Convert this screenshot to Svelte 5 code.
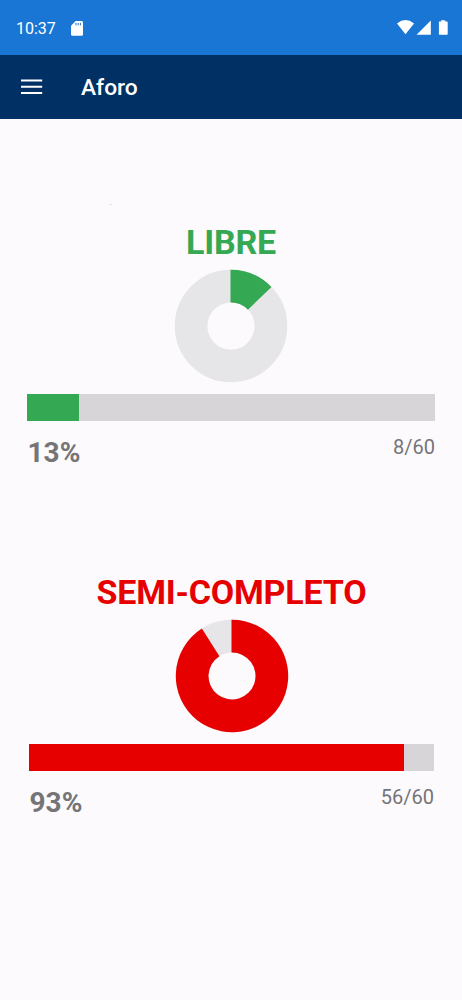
<script>
  const zones = [
    { id: 'libre', label: 'LIBRE', used: 8, total: 60, percent: 13, bar: 12.8, slice: 12.8, color: '#34a853' },
    { id: 'semi', label: 'SEMI-COMPLETO', used: 56, total: 60, percent: 93, bar: 92.6, slice: 91, color: '#e60000' }
  ];

  const R = 56.2;
  const r = 23.5;

  function slicePath(share) {
    const a = (share / 100) * Math.PI * 2;
    const s = Math.sin(a);
    const c = -Math.cos(a);
    const large = share > 50 ? 1 : 0;
    return `M-.5 ${-R}A${R} ${R} 0 ${large} 1 ${R * s} ${R * c}L${r * s} ${r * c}A${r} ${r} 0 ${large} 0 -.5 ${-r}Z`;
  }
</script>

<div class="screen">
  <div class="status">
    <span class="time">10:37</span>
    <svg class="sd" width="12" height="15" viewBox="0 0 12 15">
      <path fill="#fff" d="M4.6 0H10.6Q12 0 12 1.4V13.4Q12 14.8 10.6 14.8H1.4Q0 14.8 0 13.4V4.7Z" />
      <path stroke="#1976d2" stroke-width="1" d="M5 1.9V4.3M7.2 1.9V4.3M9.4 1.9V4.3" />
    </svg>
    <svg class="signals" width="52" height="16" viewBox="0 0 52 16" fill="#fff">
      <path d="M0 3.4Q8.5-3.2 17 3.4L8.5 14.3Z" />
      <path d="M33.8 .6V14.8H19.6Z" />
      <path d="M44.2 .2H48.2V1.5H50Q50.7 1.5 50.7 2.2V14Q50.7 14.8 50 14.8H42.6Q41.9 14.8 41.9 14V2.2Q41.9 1.5 42.6 1.5H44.2Z" />
    </svg>
  </div>

  <header>
    <svg class="menu" width="22" height="16" viewBox="0 0 22 16">
      <path stroke="#fff" stroke-width="2" d="M0 1.5H21.2M0 7.7H21.2M0 13.9H21.2" />
    </svg>
    <h1>Aforo</h1>
  </header>

  <main>
    <div class="speck"></div>
    {#each zones as zone (zone.id)}
      <section class={zone.id}>
        <h2 style:color={zone.color}>{zone.label}</h2>
        <svg class="donut" width="114" height="114" viewBox="-57 -57 114 114">
          <circle r="39.9" fill="none" stroke="#e6e5e7" stroke-width="32.7" />
          <path d={slicePath(zone.slice)} fill={zone.color} />
        </svg>
        <div class="bar">
          <div class="fill" style:width="{zone.bar}%" style:background={zone.color}></div>
        </div>
        <div class="figures">
          <span class="percent">{zone.percent}%</span>
          <span class="count">{zone.used}/{zone.total}</span>
        </div>
      </section>
    {/each}
  </main>
</div>

<style>
  :global(body) {
    background: #fcfafd;
  }
  .screen {
    height: 1000px;
    overflow: hidden;
    background: #fcfafd;
    font-family: Roboto, sans-serif;
  }
  .status {
    display: flex;
    align-items: center;
    box-sizing: border-box;
    height: 55px;
    padding: 1px 13px 0 16px;
    background: #1976d4;
    color: #fff;
  }
  .time {
    width: 55px;
    font-size: 16px;
    font-weight: 400;
    line-height: 20px;
    margin-top: 1px;
  }
  .signals {
    margin-left: auto;
  }
  header {
    display: flex;
    align-items: center;
    box-sizing: border-box;
    height: 64px;
    padding: 0 21px;
    background: #003064;
    color: #fff;
  }
  .menu {
    margin-right: 38px;
  }
  h1 {
    margin: 2px 0 0;
    font-size: 22.8px;
    font-weight: 500;
    line-height: 28px;
  }
  main {
    padding-top: 85px;
  }
  .speck {
    width: 3px;
    height: 1px;
    margin-left: 109px;
    background: #e3e1e4;
  }
  section {
    display: flex;
    flex-direction: column;
  }
  .libre {
    padding: 17px 27px 0;
  }
  .semi {
    padding: 89px 28px 0 29px;
  }
  h2 {
    margin: 0;
    text-align: center;
    font-size: 34px;
    font-weight: 700;
    line-height: 40px;
    letter-spacing: -0.2px;
  }
  .donut {
    display: block;
    align-self: center;
    margin: 7px 0 11px;
  }
  .bar {
    height: 27px;
    background: #d7d5d8;
  }
  .fill {
    height: 100%;
  }
  .figures {
    display: flex;
    justify-content: space-between;
    align-items: flex-start;
    height: 48px;
    padding-top: 14px;
    color: #757477;
  }
  .percent {
    margin: 2px 0 0 0.5px;
    font-size: 28px;
    font-weight: 700;
    line-height: 32px;
  }
  .count {
    font-size: 20px;
    line-height: 24px;
  }
</style>
